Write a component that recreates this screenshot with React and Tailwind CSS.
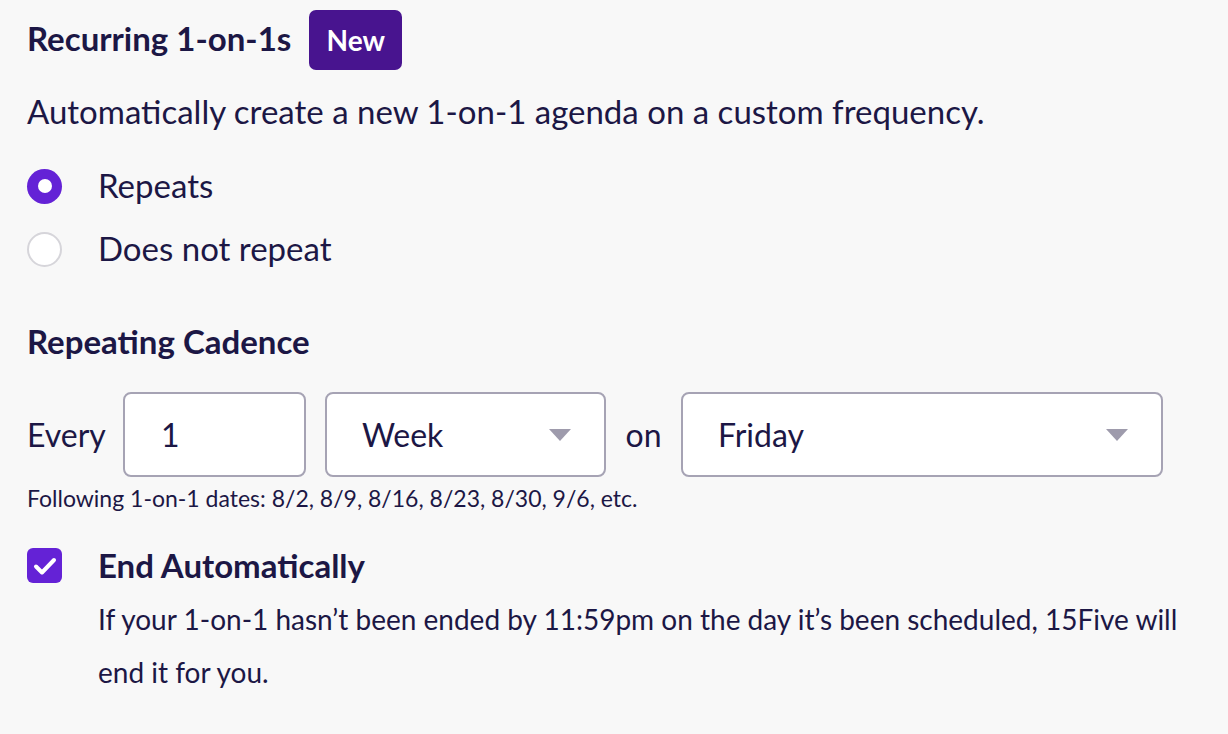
import React, { useState } from 'react';

const font = { fontFamily: 'Lato, "Noto Sans", sans-serif' };

function Caret() {
  return (
    <svg width="22" height="12" viewBox="0 0 22 12" className="shrink-0">
      <path d="M0 0 H22 L11 12 Z" fill="#9e9bac" />
    </svg>
  );
}

function Select({ value, className }) {
  return (
    <div className={`h-[85px] flex items-center justify-between pl-[35px] pr-[33px] bg-white border-2 border-[#a6a3b4] rounded-[8px] ${className}`}>
      <span className="text-[32px]">{value}</span>
      <Caret />
    </div>
  );
}

export default function App() {
  const [repeats, setRepeats] = useState(true);
  const [endAuto, setEndAuto] = useState(true);

  return (
    <div className="min-h-screen bg-[#f8f8f8] text-[#1c1745] pl-[27px] pt-[10px]" style={font}>
      {/* header */}
      <div className="flex items-center h-[60px]">
        <h2 className="text-[33px] font-bold leading-[40px] mb-[4px]">Recurring 1-on-1s</h2>
        <span className="ml-[18px] h-[60px] w-[93px] flex items-center justify-center rounded-[7px] bg-[#48148f] text-white text-[28px] font-bold">
          New
        </span>
      </div>

      <p className="mt-[21px] text-[33px] leading-[40px]">
        Automatically create a new 1-on-1 agenda on a custom frequency.
      </p>

      {/* repeat options */}
      <div className="mt-[33px] flex flex-col gap-[19px]">
        {[
          { label: 'Repeats', on: repeats, set: () => setRepeats(true) },
          { label: 'Does not repeat', on: !repeats, set: () => setRepeats(false) },
        ].map((r) => (
          <button key={r.label} onClick={r.set} className="flex items-center h-[44px] text-left">
            {r.on ? (
              <span className="w-[35px] h-[35px] rounded-full bg-[#6422d6] flex items-center justify-center">
                <span className="w-[14px] h-[14px] rounded-full bg-white" />
              </span>
            ) : (
              <span className="w-[35px] h-[35px] rounded-full bg-white border-2 border-[#d6d5da]" />
            )}
            <span className="ml-[36px] text-[33px] leading-[44px] mb-[3px]">{r.label}</span>
          </button>
        ))}
      </div>

      <h3 className="mt-[50px] text-[33px] font-bold leading-[40px]">Repeating Cadence</h3>

      {/* cadence controls */}
      <div className="mt-[31px] flex items-center">
        <span className="text-[32px] w-[96px]">Every</span>
        <div className="h-[85px] w-[183px] flex items-center pl-[36px] bg-white border-2 border-[#a6a3b4] rounded-[8px] text-[32px]">
          1
        </div>
        <Select value="Week" className="ml-[19px] w-[281px]" />
        <span className="text-[32px] w-[75px] text-center">on</span>
        <Select value="Friday" className="w-[482px]" />
      </div>
      <p className="mt-[6px] text-[23px] leading-[30px]">
        Following 1-on-1 dates: 8/2, 8/9, 8/16, 8/23, 8/30, 9/6, etc.
      </p>

      {/* end automatically */}
      <div className="mt-[30px] flex items-start">
        <button
          onClick={() => setEndAuto(!endAuto)}
          className={`mt-[5px] w-[35px] h-[35px] rounded-[6px] flex items-center justify-center shrink-0 ${endAuto ? 'bg-[#6422d6]' : 'bg-white border-2 border-[#d6d5da]'}`}
        >
          {endAuto && (
            <svg width="26" height="22" viewBox="0 0 26 22">
              <path d="M4 11.5 L10 17.5 L22 5" stroke="white" strokeWidth="4" fill="none" strokeLinecap="round" strokeLinejoin="round" />
            </svg>
          )}
        </button>
        <div className="ml-[36px]">
          <div className="text-[33px] font-bold leading-[44px]">End Automatically</div>
          <p className="mt-[6px] text-[28px] leading-[53px] pr-[30px]">
            If your 1-on-1 hasn’t been ended by 11:59pm on the day it’s been scheduled, 15Five will end it for you.
          </p>
        </div>
      </div>
    </div>
  );
}
